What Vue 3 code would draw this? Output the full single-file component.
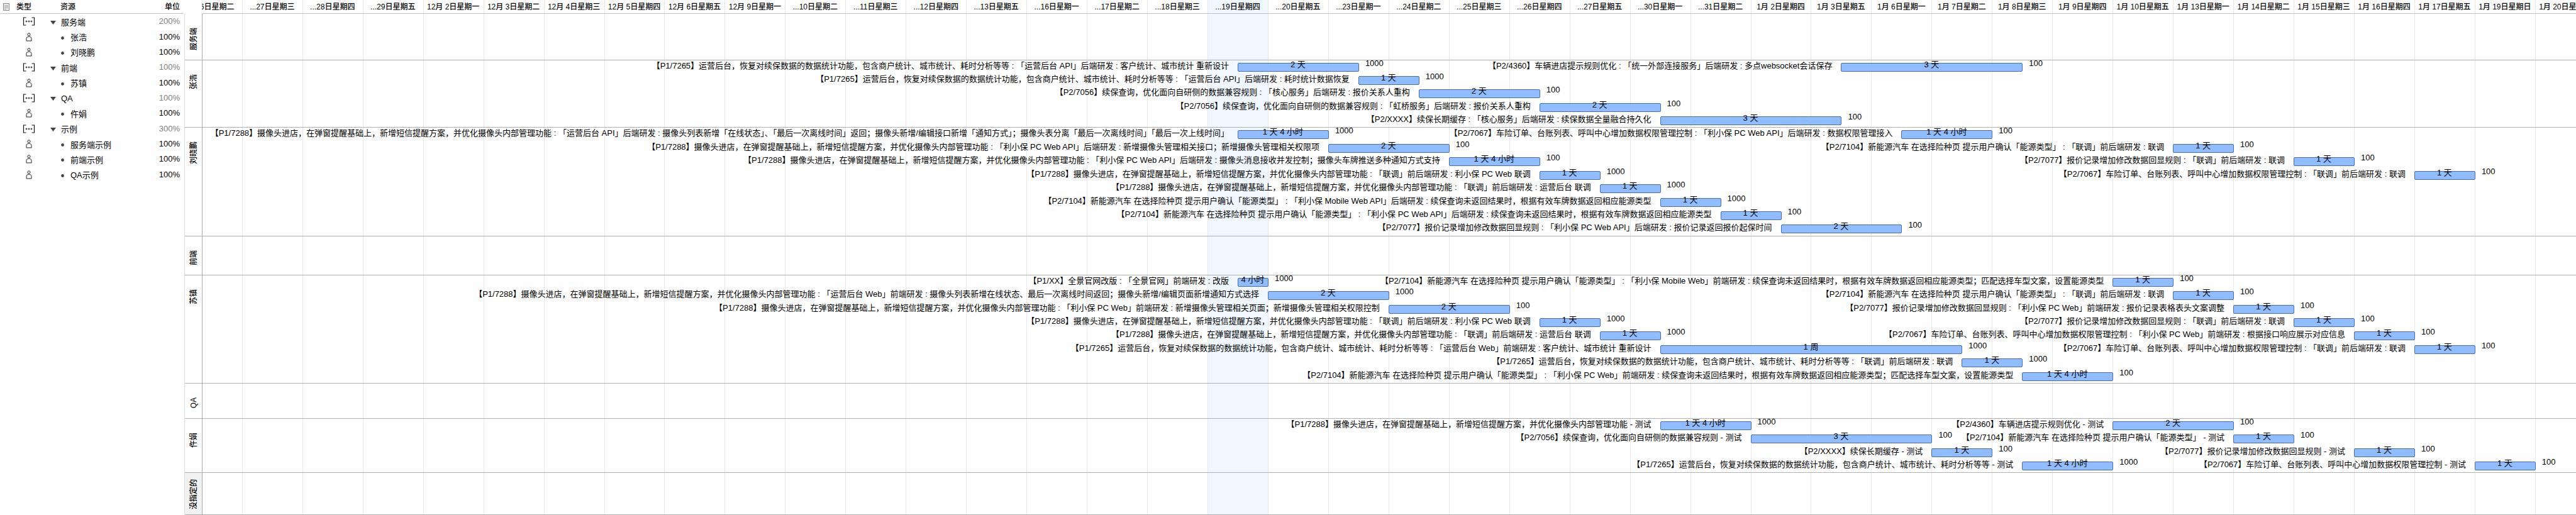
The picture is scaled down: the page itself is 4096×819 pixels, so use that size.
<script setup>
const resources = [
  { group: true, name: '服务端', units: '200%' },
  { name: '张浩', units: '100%' },
  { name: '刘晓鹏', units: '100%' },
  { group: true, name: '前端', units: '100%' },
  { name: '苏镇', units: '100%' },
  { group: true, name: 'QA', units: '100%' },
  { name: '仵娟', units: '100%' },
  { group: true, name: '示例', units: '300%' },
  { name: '服务端示例', units: '100%' },
  { name: '前端示例', units: '100%' },
  { name: 'QA示例', units: '100%' }
]

const dates = [
  '...26日星期二', '...27日星期三', '...28日星期四', '...29日星期五',
  '12月 2日星期一', '12月 3日星期二', '12月 4日星期三', '12月 5日星期四', '12月 6日星期五',
  '12月 9日星期一', '...10日星期二', '...11日星期三', '...12日星期四', '...13日星期五',
  '...16日星期一', '...17日星期二', '...18日星期三', '...19日星期四', '...20日星期五',
  '...23日星期一', '...24日星期二', '...25日星期三', '...26日星期四', '...27日星期五',
  '...30日星期一', '...31日星期二', '1月 2日星期四', '1月 3日星期五',
  '1月 6日星期一', '1月 7日星期二', '1月 8日星期三', '1月 9日星期四', '1月 10日星期五',
  '1月 13日星期一', '1月 14日星期二', '1月 15日星期三', '1月 16日星期四', '1月 17日星期五',
  '1月 19日星期日', '1月 20日星期一'
]
const today = 17

const camera = '【P1/7288】摄像头进店，在弹窗提醒基础上，新增短信提醒方案，并优化摄像头内部管理功能'
const stats = '【P1/7265】运营后台，恢复对续保数据的数据统计功能，包含商户统计、城市统计、耗时分析等等'
const quote = '【P2/7056】续保查询，优化面向自研侧的数据兼容规则'
const cache = '【P2/XXXX】续保长期缓存'
const energy = '【P2/7104】新能源汽车 在选择险种页 提示用户确认「能源类型」'
const record = '【P2/7077】报价记录增加修改数据回显规则'
const access = '【P2/7067】车险订单、台账列表、呼叫中心增加数据权限管理控制'
const arrive = '【P2/4360】车辆进店提示规则优化'
const joint = ' : 「联调」前后端研发 : '
const fallback = '续保查询未返回结果时，根据有效车牌数据返回相应能源类型'

// Each task: row, first day, last day (in half-day steps), duration, priority, title
const lanes = [
  { name: '服务端', size: 75, rows: 1, tasks: [] },
  {
    name: '张浩', size: 110, rows: 5, tasks: [
      [1, 17.5, 19.5, '2 天', 1000, stats + ' : 「运营后台 API」后端研发 : 客户统计、城市统计 重新设计'],
      [1, 27.5, 30.5, '3 天', 100, arrive + ' : 「统一外部连接服务」后端研发 : 多点websocket会话保存'],
      [2, 19.5, 20.5, '1 天', 1000, stats + ' : 「运营后台 API」后端研发 : 耗时统计数据恢复'],
      [3, 20.5, 22.5, '2 天', 100, quote + ' : 「核心服务」后端研发 : 报价关系人重构'],
      [4, 22.5, 24.5, '2 天', 100, quote + ' : 「虹桥服务」后端研发 : 报价关系人重构'],
      [5, 24.5, 27.5, '3 天', 100, cache + ' : 「核心服务」后端研发 : 续保数据全量融合持久化']
    ]
  },
  {
    name: '刘晓鹏', size: 176, rows: 8, tasks: [
      [1, 17.5, 19, '1 天 4 小时', 1000, camera + ' : 「运营后台 API」后端研发 : 摄像头列表新增「在线状态」、「最后一次离线时间」返回；摄像头新增/编辑接口新增「通知方式」；摄像头表分离「最后一次离线时间」「最后一次上线时间」'],
      [1, 28.5, 30, '1 天 4 小时', 100, access + ' : 「利小保 PC Web API」后端研发 : 数据权限管理接入'],
      [2, 19, 21, '2 天', 100, camera + ' : 「利小保 PC Web API」后端研发 : 新增摄像头管理相关接口；新增摄像头管理相关权限项'],
      [2, 33, 34, '1 天', 100, energy + joint + '联调'],
      [3, 21, 22.5, '1 天 4 小时', 100, camera + ' : 「利小保 PC Web API」后端研发 : 摄像头消息接收并发控制；摄像头车牌推送多种通知方式支持'],
      [3, 35, 36, '1 天', 100, record + joint + '联调'],
      [4, 22.5, 23.5, '1 天', 1000, camera + joint + '利小保 PC Web 联调'],
      [4, 37, 38, '1 天', 100, access + joint + '联调'],
      [5, 23.5, 24.5, '1 天', 1000, camera + joint + '运营后台 联调'],
      [6, 24.5, 25.5, '1 天', 1000, energy + ' : 「利小保 Mobile Web API」后端研发 : ' + fallback],
      [7, 25.5, 26.5, '1 天', 100, energy + ' : 「利小保 PC Web API」后端研发 : ' + fallback],
      [8, 26.5, 28.5, '2 天', 100, record + ' : 「利小保 PC Web API」后端研发 : 报价记录返回报价起保时间']
    ]
  },
  { name: '前端', size: 63, rows: 1, tasks: [] },
  {
    name: '苏镇', size: 176, rows: 8, tasks: [
      [1, 17.5, 18, '4 小时', 1000, '【P1/XX】全景官网改版 : 「全景官网」前端研发 : 改版'],
      [1, 32, 33, '1 天', 100, energy + ' : 「利小保 Mobile Web」前端研发 : ' + fallback + '；匹配选择车型文案，设置能源类型'],
      [2, 18, 20, '2 天', 1000, camera + ' : 「运营后台 Web」前端研发 : 摄像头列表新增在线状态、最后一次离线时间返回；摄像头新增/编辑页面新增通知方式选择'],
      [2, 33, 34, '1 天', 100, energy + joint + '联调'],
      [3, 20, 22, '2 天', 100, camera + ' : 「利小保 PC Web」前端研发 : 新增摄像头管理相关页面；新增摄像头管理相关权限控制'],
      [3, 34, 35, '1 天', 100, record + ' : 「利小保 PC Web」前端研发 : 报价记录表格表头文案调整'],
      [4, 22.5, 23.5, '1 天', 1000, camera + joint + '利小保 PC Web 联调'],
      [4, 35, 36, '1 天', 100, record + joint + '联调'],
      [5, 23.5, 24.5, '1 天', 1000, camera + joint + '运营后台 联调'],
      [5, 36, 37, '1 天', 100, access + ' : 「利小保 PC Web」前端研发 : 根据接口响应展示对应信息'],
      [6, 24.5, 29.5, '1 周', 1000, stats + ' : 「运营后台 Web」前端研发 : 客户统计、城市统计 重新设计'],
      [6, 37, 38, '1 天', 100, access + joint + '联调'],
      [7, 29.5, 30.5, '1 天', 1000, stats + joint + '联调'],
      [8, 30.5, 32, '1 天 4 小时', 100, energy + ' : 「利小保 PC Web」前端研发 : ' + fallback + '；匹配选择车型文案，设置能源类型']
    ]
  },
  { name: 'QA', size: 57, rows: 1, tasks: [] },
  {
    name: '仵娟', size: 88, rows: 4, tasks: [
      [1, 24.5, 26, '1 天 4 小时', 1000, camera + ' - 测试'],
      [1, 32, 34, '2 天', 100, arrive + ' - 测试'],
      [2, 26, 29, '3 天', 100, quote + ' - 测试'],
      [2, 34, 35, '1 天', 100, energy + ' - 测试'],
      [3, 29, 30, '1 天', 100, cache + ' - 测试'],
      [3, 36, 37, '1 天', 100, record + ' - 测试'],
      [4, 30.5, 32, '1 天 4 小时', 1000, stats + ' - 测试'],
      [4, 38, 39, '1 天', 100, access + ' - 测试']
    ]
  },
  { name: '没指定的', size: 68, rows: 1, tasks: [], unassigned: true }
]

const laneRows = { gridTemplateRows: lanes.map(l => `minmax(0, ${l.size}fr)`).join(' ') }
const place = ([row, from, to]) => ({ gridRow: row, gridColumn: `${from * 2 + 1} / ${to * 2 + 1}` })
</script>

<template>
  <main class="app">
    <aside class="resources">
      <table>
        <colgroup><col class="c-note"><col class="c-type"><col><col class="c-unit"></colgroup>
        <thead>
          <tr>
            <th class="note">
              <svg width="10" height="12" viewBox="0 0 10 12" role="img" aria-label="备注">
                <rect x="0.5" y="0.5" width="9" height="11" fill="#ececec" stroke="#8a8a8a" />
                <path d="M2 3.5h6M2 5.5h6M2 7.5h6M2 9.5h3" stroke="#a8a8a8" stroke-width="1" />
              </svg>
            </th>
            <th>类型</th>
            <th class="name">资源</th>
            <th class="units">单位</th>
          </tr>
        </thead>
        <tbody>
          <tr v-for="r in resources" :key="r.name">
            <td></td>
            <td class="type">
              <svg v-if="r.group" width="20" height="14" viewBox="0 0 20 14" fill="none" stroke="#111">
                <path d="M5.500 1H1.500V13H5.500M14.500 1H18.500V13H14.500" stroke-width="1.2" />
                <circle cx="6" cy="7" r="1" stroke-width="0.9" /><circle cx="10" cy="7" r="1" stroke-width="0.9" /><circle cx="14" cy="7" r="1" stroke-width="0.9" />
              </svg>
              <svg v-else width="10" height="14" viewBox="0 0 10 14" fill="none" stroke="#222" stroke-width="1">
                <circle cx="5" cy="2.9" r="2.1" />
                <path d="M1 13V9.6C1 7.4 2.6 6.2 5 6.2S9 7.4 9 9.6V13Z" stroke-linejoin="round" />
              </svg>
            </td>
            <td class="name">
              <div class="entry" :class="{ child: !r.group }">
                <svg v-if="r.group" width="9" height="6" viewBox="0 0 9 6"><path d="M0 0H9L4.500 6Z" fill="#444" /></svg>
                <svg v-else width="5" height="5" viewBox="0 0 5 5"><circle cx="2.500" cy="2.500" r="2.400" fill="#444" /></svg>
                <span>{{ r.name }}</span>
              </div>
            </td>
            <td class="units" :class="{ sum: r.group }">{{ r.units }}</td>
          </tr>
        </tbody>
      </table>
    </aside>

    <section class="schedule">
      <div class="calendar">
        <div class="days">
          <div v-for="(d, i) in dates" :key="i" class="day" :class="{ today: i === today }"></div>
        </div>
      </div>
      <header class="dates">
        <div class="track">
          <span v-for="(d, i) in dates" :key="i">{{ d }}</span>
        </div>
      </header>
      <div class="lane-names" :style="laneRows">
        <div v-for="l in lanes" :key="l.name" class="lane-name" :class="{ unassigned: l.unassigned }">
          <span>{{ l.name }}</span>
        </div>
      </div>
      <div class="chart" :style="laneRows">
        <div v-for="l in lanes" :key="l.name" class="lane">
          <div class="track tasks" :style="{ gridTemplateRows: `repeat(${l.rows}, minmax(0, 1fr))` }">
            <div v-for="(t, i) in l.tasks" :key="i" class="task" :style="place(t)">
              <div class="bar"></div>
              <span class="title">{{ t[5] }}</span>
              <span class="duration">{{ t[3] }}</span>
              <span class="priority">{{ t[4] }}</span>
            </div>
          </div>
        </div>
      </div>
    </section>
  </main>
</template>

<style>
body {
  margin: 0;
  background: #fff;
}
</style>

<style scoped>
.app {
  display: flex;
  height: 100vh;
  min-height: 640px;
  overflow: hidden;
  color: #000;
  font: 13px/16px "Liberation Sans", "Noto Sans CJK SC", sans-serif;
}

/* resource outline */
.resources {
  flex: 0 0 293px;
}
table {
  width: 291px;
  height: 290px;
  table-layout: fixed;
  border-collapse: separate;
  border-spacing: 0;
}
.c-note { width: 26px; }
.c-type { width: 40px; }
.c-unit { width: 60px; }
th, td {
  padding: 0;
  text-align: left;
  vertical-align: middle;
}
th {
  box-sizing: border-box;
  height: 22px;
  border-bottom: 1px solid #c8c8c8;
  font-size: 12px;
  font-weight: 500;
}
th.note { padding-left: 5px; }
th svg, td svg { display: block; }
th.name { padding-left: 30px; }
td.name { padding-left: 14px; }
td.type svg { margin: 0 auto; }
.entry {
  display: flex;
  align-items: center;
  gap: 8px;
  padding-top: 3px;
}
.entry.child {
  padding-left: 17px;
  gap: 10px;
}
th.units, td.units {
  padding-right: 5px;
  text-align: right;
}
td.sum { color: #808080; }

/* schedule */
.schedule {
  position: relative;
  flex: 1;
  min-width: 0;
  display: grid;
  grid-template-columns: 28px minmax(0, 1fr);
  grid-template-rows: 22px minmax(0, 1fr);
}
.calendar {
  grid-area: 1 / 2 / 3 / 3;
  overflow: hidden;
  padding-left: 1px;
}
.track, .days {
  display: grid;
  grid-template-columns: repeat(40, minmax(0, 1fr));
  width: calc(100% * 40 / 39.334);
  height: 100%;
  margin-left: calc(100% * -0.345 / 39.334);
}
.day { border-left: 1px solid #e8e8e8; }
.day.today { background: #f0f7ff; }
.dates {
  grid-area: 1 / 2;
  z-index: 1;
  overflow: hidden;
  padding-left: 1px;
  border-bottom: 1px solid #c0c0c0;
  font-size: 12px;
  font-weight: 500;
  line-height: 23px;
  text-align: center;
  white-space: nowrap;
}
.lane-names {
  grid-area: 2 / 1;
  display: grid;
  border-left: 1px solid #dcdcdc;
}
.lane-name {
  display: flex;
  justify-content: center;
  padding-top: 22px;
  border-bottom: 1px solid #b0b0b0;
  font-size: 12px;
  font-weight: 500;
}
.lane-name span {
  align-self: flex-start;
  writing-mode: vertical-rl;
  text-orientation: sideways;
  transform: rotate(180deg);
}
.lane-name.unassigned {
  padding-top: 10px;
  background: #f2f2f2;
}
.chart {
  grid-area: 2 / 2;
  z-index: 1;
  display: grid;
  overflow: hidden;
  border-left: 1px solid #a8a8a8;
}
.lane {
  border-bottom: 1px solid #b0b0b0;
  min-width: 0;
}
.tasks { grid-template-columns: repeat(80, minmax(0, 1fr)); }
.task {
  position: relative;
  padding-top: 4px;
  white-space: nowrap;
}
.bar {
  box-sizing: border-box;
  width: calc(100% + 1px);
  height: 14px;
  border: 1px solid #4c6c9e;
  border-radius: 2px;
  background: #90bdff;
}
.title {
  position: absolute;
  top: 1px;
  right: 100%;
  margin-right: 14px;
}
.duration {
  position: absolute;
  top: -1px;
  left: 0;
  right: 0;
  text-align: center;
}
.priority {
  position: absolute;
  top: -3px;
  left: 100%;
  margin-left: 11px;
}
</style>
